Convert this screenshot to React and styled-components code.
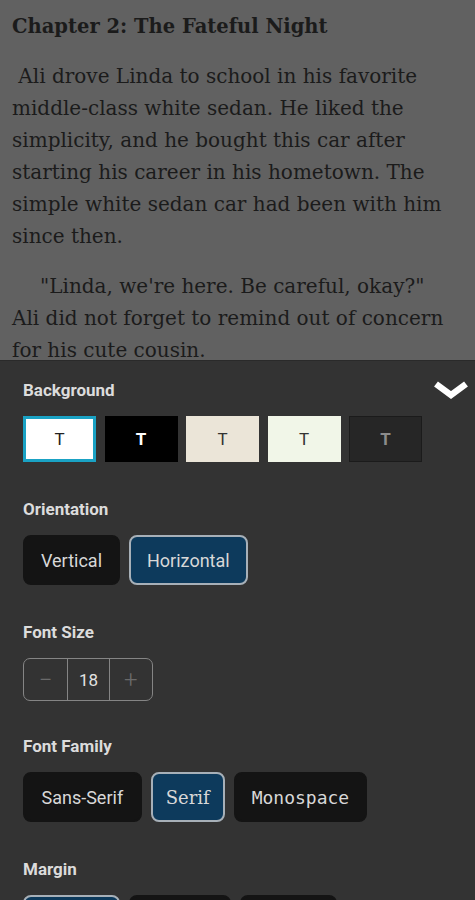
import React, { useState } from 'react';
import styled, { createGlobalStyle } from 'styled-components';

const GlobalStyle = createGlobalStyle`
html, body {
  margin:0;
  padding:0;
  height:900px;
  overflow:hidden;
  background-color:#333333;
}
* { box-sizing:border-box; }`;

const Page = styled.div`
width:475px;
height:900px;
display:flex;
flex-direction:column;
overflow:hidden;`;

const Reader = styled.div`
height:360px;
flex-shrink:0;
overflow:hidden;
background-color:#616161;
padding:11px 8px 0 12px;
font-family:"DejaVu Serif", serif;
color:#1b1b1b;`;

const ChapterTitle = styled.div`
font-size:19.5px;
font-weight:bold;
line-height:32px;
margin-bottom:17px;`;

const Paragraph = styled.p`
margin:0 0 18px 0;
font-size:20px;
line-height:32px;
text-indent:${props => props.indent};`;

const Panel = styled.div`
flex:1;
background-color:#333333;
border-top:1px solid #2a2a2a;
padding:19px 0 0 23px;
font-family:Roboto, "Liberation Sans", sans-serif;`;

const Section = styled.div`
margin-bottom:${props => props.gap || '37px'};`;

const HeaderRow = styled.div`
display:flex;
justify-content:space-between;
align-items:center;
height:20px;
margin-bottom:16px;`;

const Label = styled.div`
font-size:17px;
font-weight:bold;
color:#dcdcdc;
line-height:20px;`;

const Chevron = styled.svg`
width:40px;
height:26px;
margin-right:4px;`;

const SwatchRow = styled.div`
display:flex;
gap:8.5px;`;

const Swatch = styled.div`
width:73px;
height:46px;
display:flex;
justify-content:center;
align-items:center;
background-color:${props => props.bg};
color:${props => props.fg};
border:${props => props.selected ? '3px solid #1aa2c4' : `1px solid ${props.edge}`};
font-size:17px;
font-weight:${props => props.bold ? 'bold' : 'normal'};
cursor:pointer;`;

const ButtonRow = styled.div`
display:flex;
gap:9px;`;

const OptionButton = styled.div`
height:50px;
padding:0 ${props => props.pad || '16px'};
min-width:${props => props.minWidth || 'auto'};
display:flex;
justify-content:center;
align-items:center;
border-radius:8px;
background-color:${props => props.selected ? '#0d3a5c' : '#141414'};
border:2px solid ${props => props.selected ? '#a7b0b8' : '#141414'};
color:#d8d8d8;
font-family:${props => props.font || 'Roboto, "Liberation Sans", sans-serif'};
font-size:18px;
cursor:pointer;`;

const Stepper = styled.div`
display:flex;
width:130px;
height:43px;
border:1.5px solid #858585;
border-radius:7px;
overflow:hidden;`;

const StepCell = styled.div`
width:${props => props.width};
display:flex;
justify-content:center;
align-items:center;
color:${props => props.dim ? '#6a6a6a' : '#e2e2e2'};
font-size:${props => props.dim ? '24px' : '17px'};
font-weight:${props => props.dim ? '300' : 'normal'};
border-left:${props => props.divider ? '1.5px solid #858585' : 'none'};`;

const swatches = [
  { bg: '#ffffff', fg: '#222222', edge: '#ffffff' },
  { bg: '#000000', fg: '#ffffff', edge: '#000000', bold: true },
  { bg: '#ebe5d8', fg: '#333333', edge: '#ebe5d8' },
  { bg: '#f1f6e8', fg: '#333333', edge: '#f1f6e8' },
  { bg: '#262626', fg: '#8c8c8c', edge: '#1b1b1b', bold: true }
];

const App = () => {
  const [bgIndex, setBgIndex] = useState(0);
  const [orientation, setOrientation] = useState('Horizontal');
  const [fontSize, setFontSize] = useState(18);
  const [family, setFamily] = useState('Serif');
  const [margin, setMargin] = useState('Small');

  return (
    <Page>
      <GlobalStyle />
      <Reader>
        <ChapterTitle>Chapter 2: The Fateful Night</ChapterTitle>
        <Paragraph indent={'0px'}>
          &nbsp;Ali drove Linda to school in his favorite middle-class white sedan. He liked the simplicity, and he bought this car after starting his career in his hometown. The simple white sedan car had been with him since then.
        </Paragraph>
        <Paragraph indent={'28px'}>
          "Linda, we're here. Be careful, okay?"<br />Ali did not forget to remind out of concern for his cute cousin.
        </Paragraph>
      </Reader>
      <Panel>
        <Section>
          <HeaderRow>
            <Label>Background</Label>
            <Chevron viewBox="0 0 40 26">
              <polyline points="5,7 20,18 35,7" fill="none" stroke="#ffffff" strokeWidth="6.5" strokeLinejoin="miter" />
            </Chevron>
          </HeaderRow>
          <SwatchRow>
            {swatches.map((s, i) => (
              <Swatch key={i} bg={s.bg} fg={s.fg} edge={s.edge} bold={s.bold} selected={i === bgIndex} onClick={() => setBgIndex(i)}>
                T
              </Swatch>
            ))}
          </SwatchRow>
        </Section>
        <Section>
          <HeaderRow>
            <Label>Orientation</Label>
          </HeaderRow>
          <ButtonRow>
            {['Vertical', 'Horizontal'].map(o => (
              <OptionButton key={o} selected={o === orientation} onClick={() => setOrientation(o)}>
                {o}
              </OptionButton>
            ))}
          </ButtonRow>
        </Section>
        <Section gap={'35px'}>
          <HeaderRow>
            <Label>Font Size</Label>
          </HeaderRow>
          <Stepper>
            <StepCell width={'44px'} dim onClick={() => setFontSize(fontSize - 1)}>−</StepCell>
            <StepCell width={'42px'} divider>{fontSize}</StepCell>
            <StepCell width={'44px'} dim divider onClick={() => setFontSize(fontSize + 1)}>+</StepCell>
          </Stepper>
        </Section>
        <Section>
          <HeaderRow>
            <Label>Font Family</Label>
          </HeaderRow>
          <ButtonRow>
            <OptionButton selected={family === 'Sans-Serif'} pad={'16.5px'} onClick={() => setFamily('Sans-Serif')}>Sans-Serif</OptionButton>
            <OptionButton selected={family === 'Serif'} font={'"DejaVu Serif", serif'} pad={'13px'} onClick={() => setFamily('Serif')}>Serif</OptionButton>
            <OptionButton selected={family === 'Monospace'} font={'"DejaVu Sans Mono", monospace'} pad={'16px'} onClick={() => setFamily('Monospace')}>Monospace</OptionButton>
          </ButtonRow>
        </Section>
        <Section>
          <HeaderRow>
            <Label>Margin</Label>
          </HeaderRow>
          <ButtonRow>
            {['Small', 'Medium', 'Large'].map(m => (
              <OptionButton key={m} minWidth={'97px'} selected={m === margin} onClick={() => setMargin(m)}>
                {m}
              </OptionButton>
            ))}
          </ButtonRow>
        </Section>
      </Panel>
    </Page>
  );
};

export default App;
